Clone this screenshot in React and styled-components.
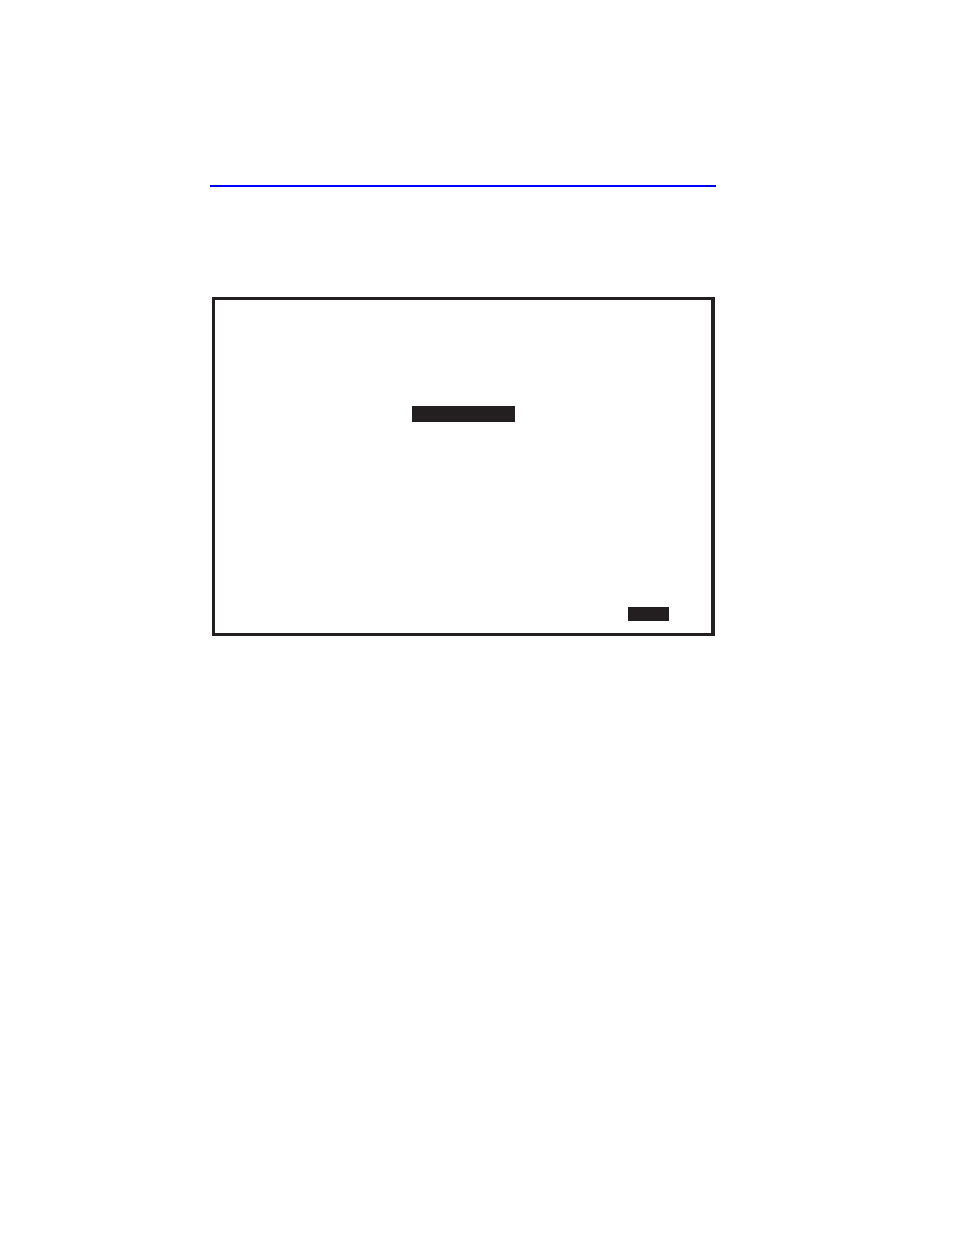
import React from "react";
import styled, { createGlobalStyle } from "styled-components";

const GlobalStyle = createGlobalStyle`
  *, *::before, *::after {
    box-sizing: border-box;
  }

  body {
    margin: 0;
    background: #ffffff;
    font-family: "Liberation Sans", sans-serif;
  }
`;

const Page = styled.main`
  display: flex;
  flex-direction: column;
  gap: 110px;
  min-height: 100vh;
  padding: 185px 238px 48px 210px;
`;

const HeaderRule = styled.hr`
  width: 100%;
  height: 2px;
  margin: 0;
  border: 0;
  background: #0000ff;
`;

const Screen = styled.section`
  display: flex;
  flex-direction: column;
  gap: 185px;
  margin: 0 1px 0 2px;
  padding: 106px 42px 12px;
  border: 3px solid #231f20;
  border-right-width: 4px;
`;

const Highlight = styled.div`
  align-self: ${({ $align }) => $align};
  width: ${({ $width }) => $width}px;
  height: ${({ $height }) => $height}px;
  background: #231f20;
`;

export default function App() {
  return (
    <>
      <GlobalStyle />
      <Page>
        <HeaderRule />
        <Screen>
          <Highlight $align="center" $width={103} $height={16} />
          <Highlight $align="flex-end" $width={41} $height={14} />
        </Screen>
      </Page>
    </>
  );
}
